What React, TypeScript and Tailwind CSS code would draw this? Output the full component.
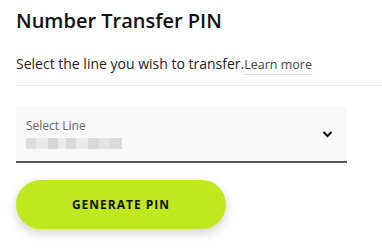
import React from "react";

export default function App() {
  return (
    <div className="w-[382px] h-[249px] bg-white pl-4 overflow-hidden" style={{ fontFamily: '"Open Sans", sans-serif' }}>
      <h1 className="pt-[7px] text-[20px] leading-[28px] font-semibold text-[#111]">Number Transfer PIN</h1>
      <p className="mt-[19px] text-[14px] leading-[20px] text-[#222]">
        Select the line you wish to transfer.
        <a className="text-[12.5px] text-[#444] border-b border-[#ddd] pb-[1px]">Learn more</a>
      </p>
      <div className="mt-[10px] h-px bg-[#e6e6e6]" />
      <div className="mt-[20px] w-[331px] h-[57px] bg-[#f9f9f9] border-b-2 border-[#555] flex items-center justify-between pl-[10px] pr-[14px]">
        <div className="flex flex-col">
          <span className="text-[12px] leading-[16px] text-[#666]">Select Line</span>
          <div className="mt-[4px] flex h-[11px] w-[96px]">
            <div className="w-[10px] bg-[#ddd]" />
            <div className="w-[12px] bg-[#e9e9e9]" />
            <div className="w-[10px] bg-[#d6d6d6]" />
            <div className="w-[8px] bg-[#eaeaea]" />
            <div className="w-[10px] bg-[#d9d9d9]" />
            <div className="w-[12px] bg-[#ebebeb]" />
            <div className="w-[10px] bg-[#d8d8d8]" />
            <div className="w-[12px] bg-[#e2e2e2]" />
            <div className="w-[12px] bg-[#dadada]" />
          </div>
        </div>
        <svg width="11" height="8" viewBox="0 0 11 8" className="mt-[1px]">
          <path d="M1.5 2 L5.5 6 L9.5 2" fill="none" stroke="#111" strokeWidth="2" />
        </svg>
      </div>
      <button className="mt-[17px] w-[210px] h-[49px] rounded-full bg-[#c1e81f] shadow-[0_4px_12px_rgba(0,0,0,0.18)] text-[12px] font-bold tracking-[1px] text-[#111]">
        GENERATE PIN
      </button>
    </div>
  );
}
